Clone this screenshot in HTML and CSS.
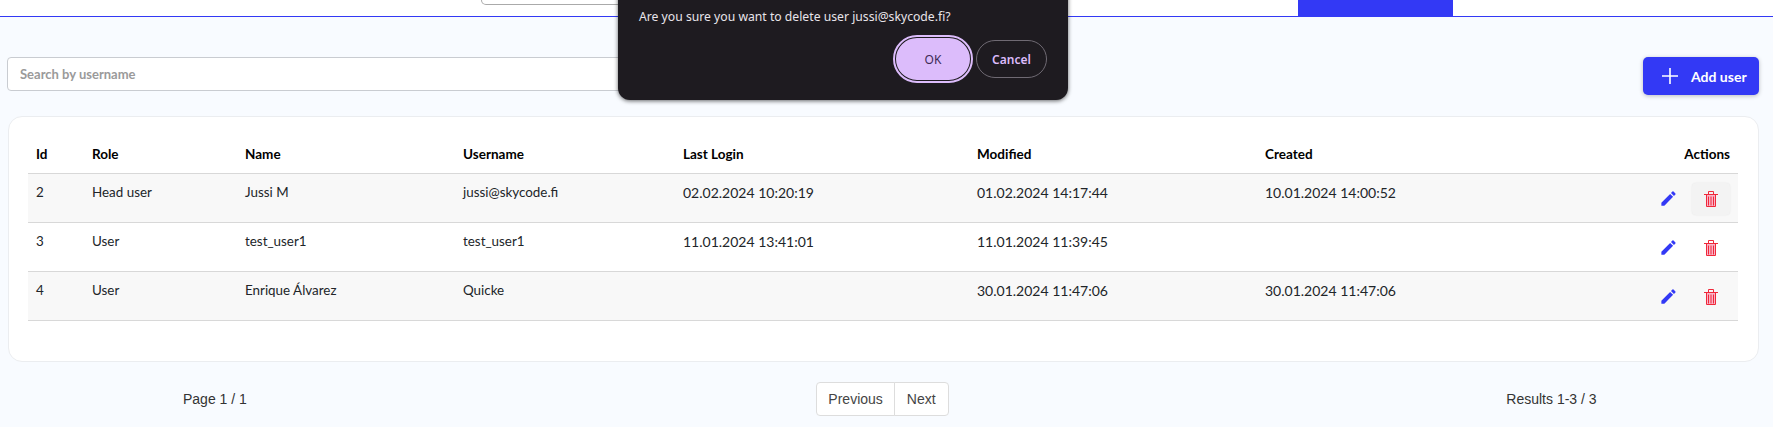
FILE: index.html
```html
<!DOCTYPE html>
<html lang="en">
<head>
    <meta charset="UTF-8">
    <meta name="viewport" content="width=device-width, initial-scale=1.0">
    <title>Users</title>
    <link rel="stylesheet" href="styles.css">
</head>
<body>
    <header class="top-bar">
        <div class="top-search"></div>
        <div class="top-tab"></div>
    </header>

    <main class="content">
        <div class="toolbar">
            <input class="search-input" type="text" placeholder="Search by username">
            <button class="add-button" type="button">
                <svg class="add-icon" viewBox="0 0 16 16" aria-hidden="true"><path d="M8 0v16M0 8h16"/></svg>
                <span>Add user</span>
            </button>
        </div>

        <section class="table-card">
            <table class="users-table">
                <colgroup>
                    <col class="col-id"><col class="col-role"><col class="col-name"><col class="col-username">
                    <col class="col-login"><col class="col-modified"><col class="col-created"><col class="col-actions">
                </colgroup>
                <thead>
                    <tr>
                        <th>Id</th><th>Role</th><th>Name</th><th>Username</th>
                        <th>Last Login</th><th>Modified</th><th>Created</th><th class="actions-head">Actions</th>
                    </tr>
                </thead>
                <tbody>
                    <tr>
                        <td>2</td><td>Head user</td><td>Jussi M</td><td>jussi@skycode.fi</td>
                        <td>02.02.2024 10:20:19</td><td>01.02.2024 14:17:44</td><td>10.01.2024 14:00:52</td>
                        <td class="actions-cell">
                            <div class="actions">
                                <button class="icon-button" type="button">
                                    <svg class="edit-icon" viewBox="0 0 24 24" aria-hidden="true"><path d="M3 17.25V21h3.75L17.81 9.94l-3.75-3.75L3 17.25zM20.71 7.04a1 1 0 0 0 0-1.41l-2.34-2.34a1 1 0 0 0-1.41 0l-1.83 1.83 3.75 3.75 1.83-1.83z"/></svg>
                                </button>
                                <button class="icon-button is-hover" type="button">
                                    <svg class="trash-icon" viewBox="0 0 14 16" aria-hidden="true"><path class="trash-fill" d="M2 4h10v11H2z"/><path class="trash-line" d="M0 3.500h14M4.500 3.500V.500h5v3M2.500 3.500v12h9v-12M4.500 5.500v9M7 5.500v9M9.500 5.500v9"/></svg>
                                </button>
                            </div>
                        </td>
                    </tr>
                    <tr>
                        <td>3</td><td>User</td><td>test_user1</td><td>test_user1</td>
                        <td>11.01.2024 13:41:01</td><td>11.01.2024 11:39:45</td><td></td>
                        <td class="actions-cell">
                            <div class="actions">
                                <button class="icon-button" type="button">
                                    <svg class="edit-icon" viewBox="0 0 24 24" aria-hidden="true"><path d="M3 17.25V21h3.75L17.81 9.94l-3.75-3.75L3 17.25zM20.71 7.04a1 1 0 0 0 0-1.41l-2.34-2.34a1 1 0 0 0-1.41 0l-1.83 1.83 3.75 3.75 1.83-1.83z"/></svg>
                                </button>
                                <button class="icon-button" type="button">
                                    <svg class="trash-icon" viewBox="0 0 14 16" aria-hidden="true"><path class="trash-fill" d="M2 4h10v11H2z"/><path class="trash-line" d="M0 3.500h14M4.500 3.500V.500h5v3M2.500 3.500v12h9v-12M4.500 5.500v9M7 5.500v9M9.500 5.500v9"/></svg>
                                </button>
                            </div>
                        </td>
                    </tr>
                    <tr>
                        <td>4</td><td>User</td><td>Enrique Álvarez</td><td>Quicke</td>
                        <td></td><td>30.01.2024 11:47:06</td><td>30.01.2024 11:47:06</td>
                        <td class="actions-cell">
                            <div class="actions">
                                <button class="icon-button" type="button">
                                    <svg class="edit-icon" viewBox="0 0 24 24" aria-hidden="true"><path d="M3 17.25V21h3.75L17.81 9.94l-3.75-3.75L3 17.25zM20.71 7.04a1 1 0 0 0 0-1.41l-2.34-2.34a1 1 0 0 0-1.41 0l-1.83 1.83 3.75 3.75 1.83-1.83z"/></svg>
                                </button>
                                <button class="icon-button" type="button">
                                    <svg class="trash-icon" viewBox="0 0 14 16" aria-hidden="true"><path class="trash-fill" d="M2 4h10v11H2z"/><path class="trash-line" d="M0 3.500h14M4.500 3.500V.500h5v3M2.500 3.500v12h9v-12M4.500 5.500v9M7 5.500v9M9.500 5.500v9"/></svg>
                                </button>
                            </div>
                        </td>
                    </tr>
                </tbody>
            </table>
        </section>

        <nav class="pagination">
            <div class="page-info">Page 1 / 1</div>
            <div class="page-buttons">
                <button class="page-button" type="button">Previous</button>
                <button class="page-button" type="button">Next</button>
            </div>
            <div class="page-results">Results 1-3 / 3</div>
        </nav>
    </main>

    <div class="confirm-dialog">
        <p class="confirm-text">Are you sure you want to delete user jussi@skycode.fi?</p>
        <div class="confirm-buttons">
            <button class="confirm-ok" type="button">OK</button>
            <button class="confirm-cancel" type="button">Cancel</button>
        </div>
    </div>
</body>
</html>
```

FILE: styles.css
```css
:root {
    --primary-blue: #3339f5;
    --page-bg: #f8fbff;
    --line-grey: #d8d8d8;
    --row-grey: #f8f8f8;
    --text-dark: #212529;
    --dialog-bg: #1e1b20;
    --dialog-accent: #dcbcfb;
}

* {
    margin: 0;
    padding: 0;
    box-sizing: border-box;
}

html, body {
    height: 427px;
    overflow: hidden;
}

body {
    background: var(--page-bg);
    color: var(--text-dark);
    font-family: 'Lato', sans-serif;
    font-size: 14px;
}

.top-bar {
    display: flex;
    align-items: flex-start;
    height: 17px;
    padding-left: 481px;
    background: #fff;
    border-bottom: 1px solid var(--primary-blue);
}

.top-search {
    width: 400px;
    height: 5px;
    border: 1px solid #aaa;
    border-top: none;
    border-radius: 0 0 14px 14px;
}

.top-tab {
    width: 155px;
    height: 16px;
    margin-left: 417px;
    background: var(--primary-blue);
}

.content {
    padding: 40px 14px 0 8px;
}

.toolbar {
    display: flex;
    justify-content: space-between;
    align-items: flex-start;
    height: 59px;
}

.search-input {
    width: 700px;
    height: 34px;
    margin-left: -1px;
    padding: 0 12px;
    background: #fff;
    border: 1px solid #c9ccd1;
    border-radius: 4px;
    font-family: 'Lato', sans-serif;
    font-size: 13px;
    font-weight: 700;
}

.search-input::placeholder {
    color: #9a9a9a;
    opacity: 1;
}

.add-button {
    display: flex;
    align-items: center;
    gap: 13px;
    width: 116px;
    height: 38px;
    padding-left: 19px;
    background: var(--primary-blue);
    color: #fff;
    border: none;
    border-radius: 5px;
    box-shadow: 0 1px 4px rgba(0, 0, 0, 0.25);
    font-family: 'Lato', sans-serif;
    font-size: 14px;
    font-weight: 700;
}

.add-icon {
    width: 16px;
    height: 16px;
    fill: none;
    stroke: #fff;
    stroke-width: 1.6;
}

.table-card {
    height: 246px;
    padding: 19px 20px 0 19px;
    background: #fff;
    border: 1px solid #ebedf0;
    border-radius: 14px;
}

.users-table {
    width: 100%;
    table-layout: fixed;
    border-collapse: collapse;
}

.col-id { width: 56px; }
.col-role { width: 153px; }
.col-name { width: 218px; }
.col-username { width: 220px; }
.col-login { width: 294px; }
.col-modified { width: 288px; }
.col-created { width: 300px; }

.users-table th {
    height: 37px;
    padding: 0 8px;
    text-align: left;
    font-size: 13.5px;
    font-weight: 700;
    color: #000;
    border-bottom: 1px solid var(--line-grey);
}

.users-table .actions-head {
    text-align: right;
}

.users-table td {
    height: 49px;
    padding: 10px 8px 0;
    vertical-align: top;
    font-size: 13.4px;
    border-bottom: 1px solid var(--line-grey);
}

/* the date columns run wider than the names */
.users-table td:nth-child(n+5) {
    font-size: 14px;
}

.users-table tbody tr:nth-child(odd) {
    background: var(--row-grey);
}

.users-table .actions-cell {
    padding-top: 9px;
}

.actions {
    display: flex;
    justify-content: flex-end;
    gap: 5px;
}

.icon-button {
    display: flex;
    align-items: center;
    justify-content: center;
    width: 38px;
    height: 32px;
    background: transparent;
    border: none;
    border-radius: 4px;
}

.icon-button.is-hover {
    background: #f3f3f3;
    box-shadow: 0 0 2px rgba(0, 0, 0, 0.08);
}

.edit-icon {
    width: 19px;
    height: 19px;
    fill: var(--primary-blue);
}

.trash-icon {
    width: 14px;
    height: 16px;
}

.trash-fill {
    fill: #f9b4c8;
}

.trash-line {
    fill: none;
    stroke: #f0283a;
    stroke-width: 1;
}

.pagination {
    display: grid;
    grid-template-columns: 1fr 1fr 1fr;
    align-items: center;
    padding-top: 20px;
    font-family: 'Liberation Sans', sans-serif;
    font-size: 14px;
    color: #333;
}

.page-info {
    padding-left: 175px;
}

.page-buttons {
    display: flex;
    justify-content: center;
    padding-right: 2px;
}

.page-results {
    padding-left: 331px;
}

.page-button {
    height: 34px;
    padding: 0 12px;
    background: #fff;
    color: #444;
    border: 1px solid #ddd;
    font-family: 'Liberation Sans', sans-serif;
    font-size: 14px;
}

.page-button:first-child {
    padding: 0 11px;
    border-radius: 4px 0 0 4px;
}

.page-button:last-child {
    margin-left: -1px;
    border-radius: 0 4px 4px 0;
}

/* browser confirm() popup, sits over the page */
.confirm-dialog {
    position: absolute;
    top: -20px;
    left: 618px;
    width: 450px;
    height: 120px;
    padding: 28px 21px 0;
    background: var(--dialog-bg);
    border-radius: 12px;
    box-shadow: 0 1px 4px rgba(0, 0, 0, 0.6);
    font-family: 'Noto Sans', sans-serif;
    font-size: 12.2px;
    color: #e8e4ea;
}

.confirm-text {
    line-height: 18px;
}

.confirm-buttons {
    display: flex;
    justify-content: flex-end;
    align-items: center;
    gap: 4px;
    margin-top: 10px;
}

.confirm-ok {
    width: 78px;
    height: 46px;
    background: var(--dialog-accent);
    color: #3e2a55;
    border: 2px solid var(--dialog-bg);
    outline: 2px solid var(--dialog-accent);
    outline-offset: -1px;
    border-radius: 23px;
    font-family: 'Noto Sans', sans-serif;
    font-size: 12px;
}

.confirm-cancel {
    width: 71px;
    height: 38px;
    background: transparent;
    color: var(--dialog-accent);
    border: 1px solid #6f6a73;
    border-radius: 19px;
    font-family: 'Noto Sans', sans-serif;
    font-size: 12px;
    font-weight: 600;
}
```
